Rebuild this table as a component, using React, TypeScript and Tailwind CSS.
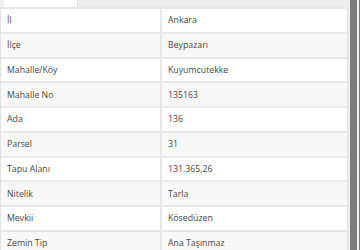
import React from "react";

const rows: [string, string][] = [
  ["İl", "Ankara"],
  ["İlçe", "Beypazarı"],
  ["Mahalle/Köy", "Kuyumcutekke"],
  ["Mahalle No", "135163"],
  ["Ada", "136"],
  ["Parsel", "31"],
  ["Tapu Alanı", "131.365,26"],
  ["Nitelik", "Tarla"],
  ["Mevkii", "Kösedüzen"],
  ["Zemin Tip", "Ana Taşınmaz"],
];

const App = () => {
  return (
    <div className="flex w-[360px] h-[250px] overflow-hidden bg-white font-['Open_Sans',sans-serif] text-[8.75px] text-[#484848]">
      <div className="flex flex-col w-[348px]">
        <div className="flex h-[7px] shrink-0 bg-[#eeeeee]">
          <div className="ml-[4px] w-[74px] bg-white border-r border-[#dddddd]" />
        </div>
        <div className="border-l border-r border-[#e2e2e2]">
          {rows.map(([k, v], i) => (
            <div
              key={k}
              className={`flex h-[24.75px] shrink-0 border-t-2 border-[#e8e8e8] ${i % 2 === 1 ? "bg-[#f8f8f8]" : "bg-white"}`}
            >
              <div className="flex items-center w-[161px] pl-[6px] pt-px border-r-2 border-[#e8e8e8]">{k}</div>
              <div className="flex items-center flex-1 pl-[6px] pt-px">{v}</div>
            </div>
          ))}
        </div>
      </div>
      <div className="w-[2px] bg-[#eeeeee]" />
      <div className="w-[7px] bg-[#7b7b7b]" />
      <div className="w-[2px] bg-[#f2f2f2]" />
      <div className="flex-1 bg-[#7b7b7b]" />
    </div>
  );
};

export default App;
